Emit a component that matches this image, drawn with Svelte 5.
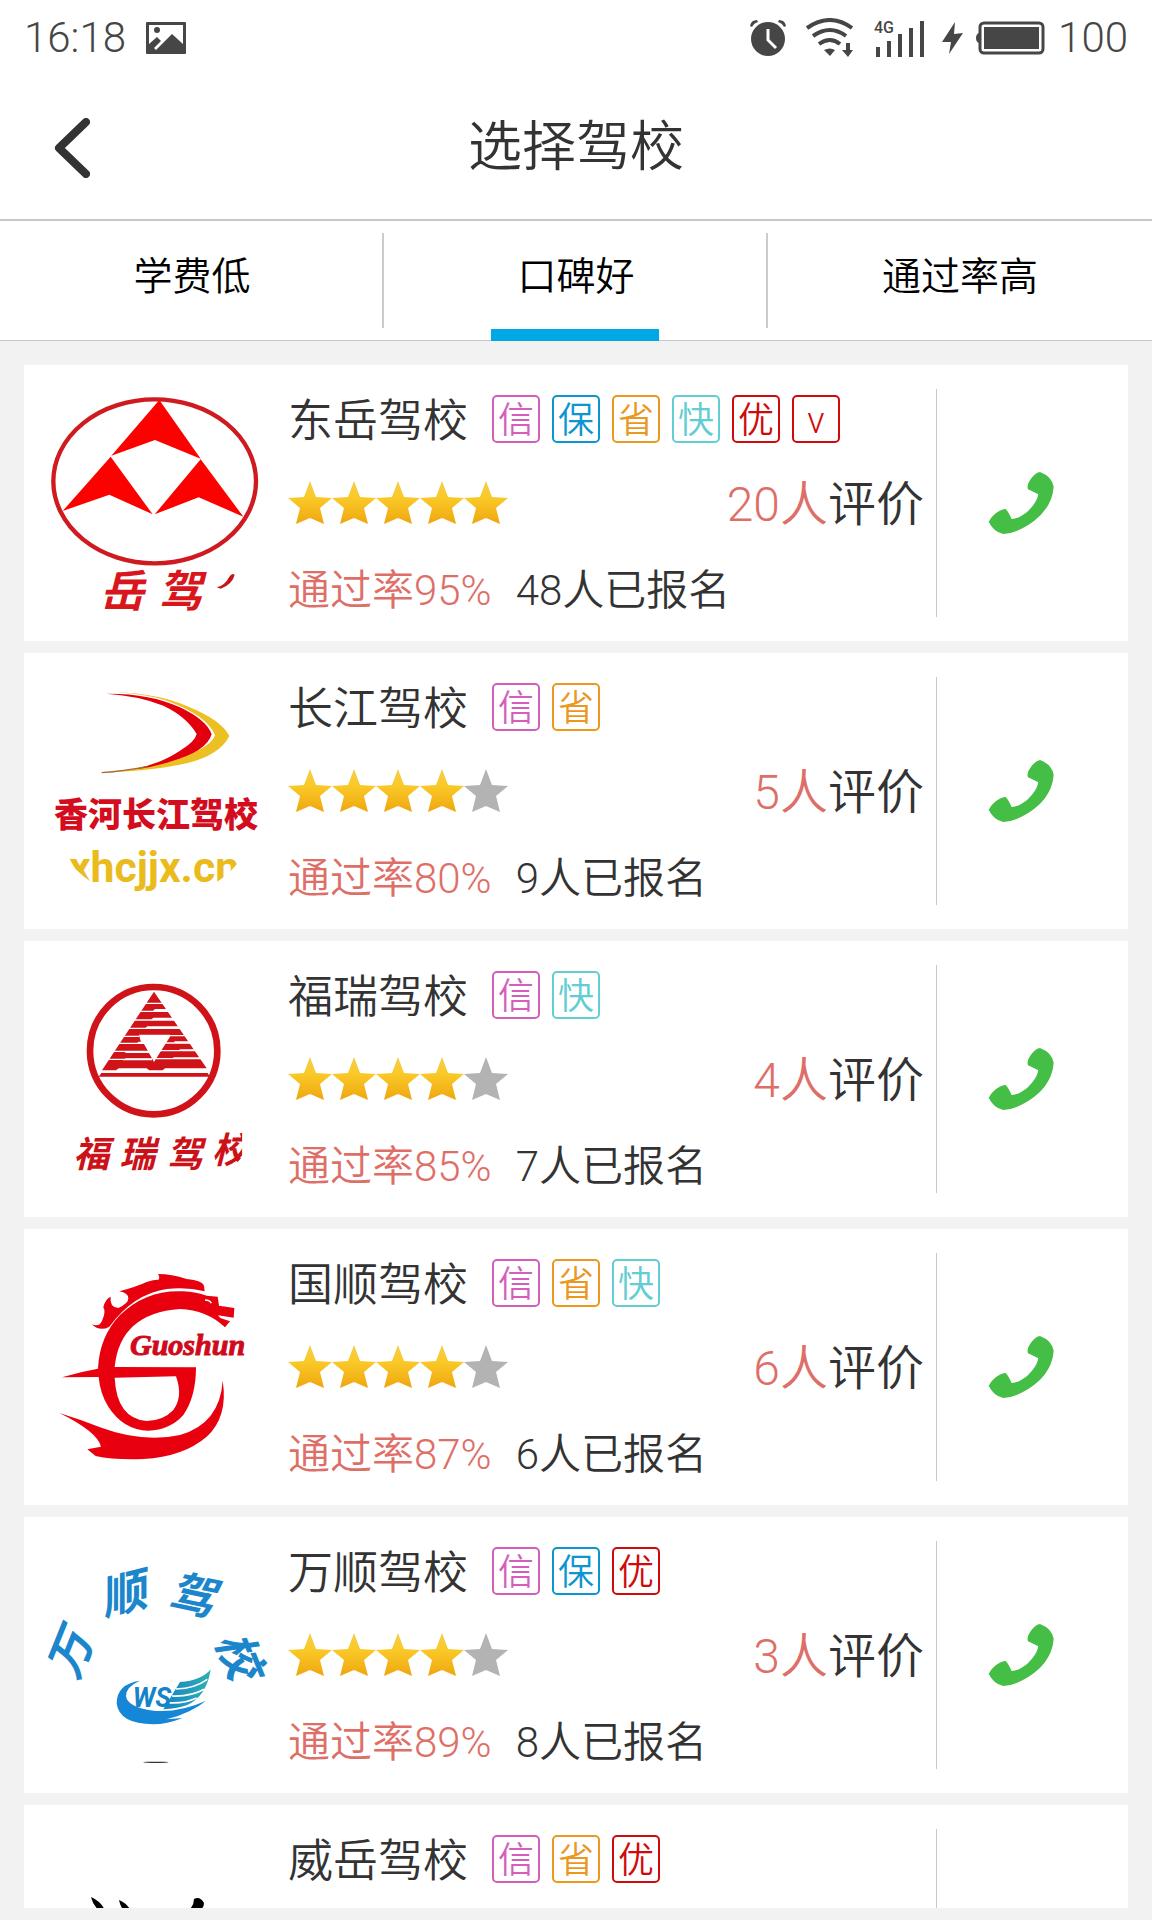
<script lang="ts">
  const tabs = ["学费低", "口碑好", "通过率高"];
  let activeTab = $state("口碑好");

  const badgeKinds = {
    信: "credit",
    保: "insured",
    省: "saving",
    快: "fast",
    优: "quality",
    v: "vip",
  };

  const schools = [
    { id: "dongyue", name: "东岳驾校", badges: ["信", "保", "省", "快", "优", "v"], stars: 5, reviews: 20, passRate: 95, enrolled: 48 },
    { id: "changjiang", name: "长江驾校", badges: ["信", "省"], stars: 4, reviews: 5, passRate: 80, enrolled: 9 },
    { id: "furui", name: "福瑞驾校", badges: ["信", "快"], stars: 4, reviews: 4, passRate: 85, enrolled: 7 },
    { id: "guoshun", name: "国顺驾校", badges: ["信", "省", "快"], stars: 4, reviews: 6, passRate: 87, enrolled: 6 },
    { id: "wanshun", name: "万顺驾校", badges: ["信", "保", "优"], stars: 4, reviews: 3, passRate: 89, enrolled: 8 },
    { id: "weiyue", name: "威岳驾校", badges: ["信", "省", "优"], stars: 4, reviews: 2, passRate: 86, enrolled: 5 },
  ];
</script>

{#snippet logo(id)}
  {#if id === "dongyue"}
    <svg class="logo" viewBox="60 87 684 684" aria-hidden="true">
      <ellipse cx="404" cy="364" rx="304" ry="246" fill="none" stroke="#cf1a20" stroke-width="13" />
      <g fill="#fb0200">
        <path d="M418 120 L542 296 L405 240 L274 287Z" />
        <path d="M272 290 L398 463 L268 404 L128 453Z" />
        <path d="M542 298 L670 470 L536 412 L404 463Z" />
      </g>
      <g class="brush" fill="#d8161c" font-size="132">
        <text x="240" y="741">岳</text>
        <text x="415" y="741">驾</text>
      </g>
      <path d="M590 682 Q615 676 628 650 Q636 638 644 644 Q638 672 602 686Z" fill="#c3161c" />
    </svg>
  {:else if id === "changjiang"}
    <svg class="logo" viewBox="60 51 684 684" aria-hidden="true">
      <path d="M290 97 Q410 100 500 138 Q605 180 628 228 Q600 285 500 310 Q420 330 245 339 Q400 322 470 297 Q575 262 585 225 Q560 165 440 122 Q380 103 290 97Z" fill="#ecc022" />
      <path d="M260 101 Q390 100 480 142 Q560 180 575 223 Q560 275 450 305 Q400 322 340 328 Q420 312 480 272 Q525 245 530 222 Q500 170 430 137 Q360 108 260 101Z" fill="#e2000f" />
      <path d="M245 338 Q310 334 380 320" fill="none" stroke="#a56a3a" stroke-width="4" />
      <text class="heavy" x="102" y="501" font-size="102" fill="#d40d1e">香河长江驾校</text>
      <clipPath id="round"><circle cx="402" cy="393" r="332" /></clipPath>
      <text class="domain" x="402" y="666" text-anchor="middle" font-size="128" fill="#eabb1c" clip-path="url(#round)">xhcjjx.cn</text>
    </svg>
  {:else if id === "furui"}
    <svg class="logo" viewBox="60 75 684 684" aria-hidden="true">
      <circle cx="401" cy="332" r="191" fill="none" stroke="#d01219" stroke-width="20" />
      <path d="M402 155 L560 385 L435 385 L428 391 L388 391 L380 385 L296 385 L288 391 L246 391Z" fill="#d01219" />
      <path d="M236 410 L244 399 H563 L570 410Z" fill="#d01219" />
      <path d="M357 284 H450 V290 L402 366 L372 312 L362 304Z" fill="#fff" />
      <path
        d="M360 190 H445 M345 214 H465 M330 240 H480 M312 265 H495 M298 289 H358 M450 287 H510 M280 310 H375 M432 309 H525 M265 334 H388 M420 332 H540 M250 358 H395 M408 356 H555"
        stroke="#fff"
        stroke-width="4"
      />
      <g fill="#fff">
        <path d="M405 207 H452 V214 H398Z" />
        <path d="M400 233 H470 V240 H392Z" />
        <path d="M382 259 H486 V266 H374Z" />
        <path d="M356 305 H375 V311 H348Z" />
        <path d="M322 333 H388 V339 H314Z" />
        <path d="M318 355 H396 V361 H308Z" />
        <path d="M462 304 H525 V310 H468Z" />
        <path d="M480 328 H540 V333 H474Z" />
        <path d="M462 352 H556 V357 H454Z" />
      </g>
      <clipPath id="round-furui"><path d="M60 75 H667 V650 L640 680 V700 H60Z" /></clipPath>
      <g class="brush" fill="#cc1118" font-size="108" clip-path="url(#round-furui)">
        <text x="160" y="680">福</text>
        <text x="298" y="680">瑞</text>
        <text x="440" y="680">驾</text>
        <text x="576" y="670">校</text>
      </g>
    </svg>
  {:else if id === "guoshun"}
    <svg class="logo" viewBox="60 69 684 684" aria-hidden="true">
      <g fill="#e8000f">
        <path d="M414 132 Q455 132 500 147 Q548 152 552 168 L554 184 Q500 170 440 177 Q340 192 268 290 Q240 306 215 283 Q240 292 247 270 Q258 245 250 232 Q256 206 272 200 Q268 232 295 234 Q326 220 325 205 Q324 188 298 184 Q350 170 380 156 Q408 148 415 150 Q421 142 414 132Z" />
        <path fill-rule="evenodd" d="M560 197 L593 200 L597 227 L643 234 L641 263 L594 256 L601 264 L630 274 L615 292 Q560 240 480 237 Q300 250 284 411 L528 412 Q528 500 490 555 Q450 600 385 602 Q310 600 265 530 Q240 490 236 441 L126 442 Q180 425 234 416 Q238 320 300 255 Q380 178 490 184 Q530 186 560 197Z M284 443 L468 439 Q490 500 460 540 Q430 572 380 573 Q290 565 284 443Z" />
        <path d="M118 549 Q180 568 240 592 Q370 640 480 615 Q600 580 608 452 Q625 560 560 620 Q490 680 370 687 Q280 690 227 678 L202 658 Q222 653 243 650 Q232 605 118 549Z" />
      </g>
      <path d="M555 210 Q570 210 574 220" fill="none" stroke="#fff" stroke-width="4" />
      <text class="script" x="330" y="376" font-size="90" fill="#cf0a1c" stroke="#cf0a1c" stroke-width="3">Guoshun</text>
    </svg>
  {:else if id === "wanshun"}
    <svg class="logo" viewBox="60 63 684 684" aria-hidden="true">
      <defs>
        <linearGradient id="sail" x1="0" y1="0" x2="1" y2="0">
          <stop offset="0" stop-color="#1582c4" />
          <stop offset="1" stop-color="#2fb0b4" />
        </linearGradient>
      </defs>
      <g class="brush" fill="#1b86cc" font-size="138" text-anchor="middle">
        <text transform="translate(150 402) rotate(-68)" y="50">万</text>
        <text transform="translate(308 222) rotate(-14)" y="50">顺</text>
        <text transform="translate(516 225) rotate(12)" y="50">驾</text>
        <text transform="translate(658 405) rotate(68)" y="50">校</text>
      </g>
      <path d="M360 482 Q290 492 290 550 Q297 612 400 613 Q440 613 488 594 L440 598 Q515 578 558 542 Q480 578 400 572 Q322 562 318 528 Q318 500 360 482Z" fill="#1686d6" />
      <path d="M480 486 Q545 482 572 448 Q560 530 500 556 Q470 566 430 568Z" fill="url(#sail)" />
      <path d="M468 507 Q525 505 562 478 M456 528 Q515 530 552 508 M444 548 Q490 552 530 534" fill="none" stroke="#fff" stroke-width="5" />
      <text class="initials" x="338" y="560" font-size="80" fill="#1583c8">WS</text>
      <ellipse cx="408" cy="727" rx="38" ry="2" fill="#333" />
    </svg>
  {:else}
    <svg class="logo" viewBox="0 0 228 228" aria-hidden="true">
      <path d="M51 68 Q62 73 65 82 H60 Q53 77 51 68Z M79 71 Q87 74 91 82 H84 Q80 77 79 71Z M148 82 Q154 77 154 70 Q160 67 164 74 Q164 79 159 82Z" fill="#000" />
    </svg>
  {/if}
{/snippet}

<div class="screen">
  <div class="status-bar">
    <span>16:18</span>
    <svg width="40" height="32" viewBox="0 0 40 32" aria-hidden="true">
      <path fill="#464646" fill-rule="evenodd" d="M1 0 H39 Q40 0 40 1 V31 Q40 32 39 32 H1 Q0 32 0 31 V1 Q0 0 1 0Z M3 3 V22 L11 15 L15 19 L8 26 L10 28 L26 12 L37 22 V3Z" />
      <circle cx="11" cy="8" r="3" fill="#464646" />
    </svg>
    <div class="status-icons">
      <svg width="36" height="38" viewBox="0 0 36 38" aria-hidden="true">
        <circle cx="18" cy="20" r="17" fill="#464646" />
        <path d="M0 7 Q1 1 7 1 L8 3 Q4 4 2 8Z M36 7 Q35 1 29 1 L28 3 Q32 4 34 8Z" fill="#464646" />
        <path d="M18 10 V21 L26 29" fill="none" stroke="#fff" stroke-width="3" />
      </svg>
      <svg width="48" height="40" viewBox="0 0 48 40" aria-hidden="true">
        <g fill="none" stroke="#464646" stroke-width="4">
          <path d="M1 10 Q24 -6 46 10" />
          <path d="M7 18 Q24 6 40 18" />
          <path d="M13 26 Q24 18 34 26" />
        </g>
        <path d="M18 32 Q24 29 29 32 L24 38Z" fill="#464646" />
        <path d="M40 25 H44 V32 H47 L42 39 L36 32 H40Z" fill="#464646" />
      </svg>
      <svg class="signal" width="52" height="38" viewBox="0 0 52 38" aria-hidden="true">
        <text x="0" y="14" font-size="16" font-weight="500" fill="#464646">4G</text>
        <path d="M2 28 h4 v10 h-4z M13 22 h4 v16 h-4z M24 15 h4 v23 h-4z M35 9 h4 v29 h-4z M46 2 h4 v36 h-4z" fill="#464646" />
      </svg>
      <svg class="bolt" width="22" height="32" viewBox="0 0 22 32" aria-hidden="true">
        <path d="M13 0 L0 20 L9 20 L7 32 L21 11 L12 12Z" fill="#464646" />
      </svg>
      <svg class="battery" width="70" height="34" viewBox="0 0 70 34" aria-hidden="true">
        <rect x="4" y="2" width="63" height="30" rx="4" fill="none" stroke="#464646" stroke-width="3" />
        <rect x="8" y="6" width="55" height="22" fill="#464646" />
        <path d="M3 12 Q0 13 0 17 Q0 21 3 22Z" fill="#464646" />
      </svg>
      <span>100</span>
    </div>
  </div>

  <header class="title-bar">
    <button class="back" type="button" aria-label="返回">
      <svg width="36" height="60" viewBox="0 0 36 60" aria-hidden="true">
        <path d="M32 4 L5 30 L32 56" fill="none" stroke="#333" stroke-width="8" stroke-linecap="round" stroke-linejoin="round" />
      </svg>
    </button>
    <h1>选择驾校</h1>
  </header>

  <nav class="tabs">
    {#each tabs as tab (tab)}
      <button
        class="tab"
        class:active={tab === activeTab}
        type="button"
        onclick={() => (activeTab = tab)}
      >
        {tab}
      </button>
    {/each}
  </nav>

  <ul class="schools">
    {#each schools as school (school.id)}
      <li class="card">
        {@render logo(school.id)}
        <div class="info">
          <div class="row">
            <h2>{school.name}</h2>
            <div class="badges">
              {#each school.badges as badge (badge)}
                <span class="badge {badgeKinds[badge]}">{badge}</span>
              {/each}
            </div>
          </div>
          <div class="row">
            <div class="stars">
              {#each [1, 2, 3, 4, 5] as n (n)}
                <svg width="44" height="44" viewBox="0 0 44 44" aria-hidden="true">
                  <path
                    class="star"
                    class:on={n <= school.stars}
                    d="M22 0 L28 16 L44 17 L32 27 L36 43 L22 37 L8 43 L12 27 L0 17 L16 16Z"
                  />
                </svg>
              {/each}
            </div>
            <p class="reviews"><span class="accent">{school.reviews}人</span>评价</p>
          </div>
          <div class="row facts">
            <span class="accent">通过率{school.passRate}%</span>
            <span>{school.enrolled}人已报名</span>
          </div>
        </div>
        <button class="call" type="button" aria-label="拨打{school.name}电话">
          <svg width="66" height="64" viewBox="862 93 198 192" aria-hidden="true">
            <path d="M1018 96 Q1054 110 1059 140 Q1055 200 1000 243 Q950 280 908 282 Q878 275 864 245 Q880 214 914 206 Q922 212 933 237 Q950 238 980 215 Q1008 190 1013 163 L982 148 Q978 138 985 125 Q1002 98 1018 96Z" fill="#45be45" />
          </svg>
        </button>
      </li>
    {/each}
  </ul>
</div>

<svg class="defs" width="0" height="0" aria-hidden="true">
  <linearGradient id="gold" x1="0" y1="0" x2="0" y2="1">
    <stop offset="0" stop-color="#f0cf4c" />
    <stop offset="0.4" stop-color="#fac928" />
    <stop offset="1" stop-color="#efa60f" />
  </linearGradient>
</svg>

<style>
  :global(body) {
    background: #f2f2f2;
  }

  .screen {
    display: flex;
    flex-direction: column;
    height: 100vh;
    overflow: hidden;
    background: #f2f2f2;
    color: #333;
    font-family: Roboto, "Noto Sans CJK SC", sans-serif;
    font-weight: 350;
  }

  h1,
  h2,
  p,
  ul {
    margin: 0;
    padding: 0;
    font-weight: inherit;
  }

  button {
    padding: 0;
    border: 0;
    background: none;
    color: inherit;
    font: inherit;
    cursor: pointer;
  }

  svg {
    display: block;
    flex: none;
  }

  .defs {
    position: absolute;
  }

  .status-bar {
    display: flex;
    align-items: center;
    gap: 20px;
    height: 76px;
    flex: none;
    padding: 0 24px;
    background: #fff;
    color: #464646;
    font-size: 42px;
    font-weight: 300;
    line-height: 76px;
  }

  .status-icons {
    display: flex;
    align-items: center;
    gap: 20px;
    margin-left: auto;
  }

  .signal {
    margin-right: -4px;
  }

  .bolt {
    margin-right: -8px;
  }

  .battery {
    margin-right: -8px;
  }

  .title-bar {
    display: grid;
    grid-template-columns: 148px 1fr 148px;
    align-items: center;
    height: 143px;
    flex: none;
    border-bottom: 2px solid #c8c8c8;
    background: #fff;
  }

  .back {
    display: flex;
    align-items: center;
    height: 100%;
    padding-left: 54px;
  }

  h1 {
    font-size: 54px;
    line-height: 72px;
    text-align: center;
  }

  .tabs {
    display: flex;
    flex: none;
    border-bottom: 1px solid #c8c8c8;
    background: #fff;
  }

  .tab {
    position: relative;
    flex: 1;
    height: 119px;
    padding-bottom: 16px;
    color: #000;
    font-size: 39px;
  }

  .tab + .tab::before {
    content: "";
    position: absolute;
    top: 12px;
    bottom: 12px;
    left: -2px;
    border-left: 2px solid #ccc;
  }

  .tab.active::after {
    content: "";
    position: absolute;
    bottom: -1px;
    left: 50%;
    width: 168px;
    height: 12px;
    margin-left: -85px;
    background: #00a8e6;
  }

  .schools {
    display: flex;
    flex: 1;
    flex-direction: column;
    gap: 12px;
    min-height: 0;
    margin: 24px 24px 12px;
    overflow: hidden;
    list-style: none;
  }

  .card {
    display: flex;
    flex: none;
    padding: 24px 24px 24px 16px;
    background: #fff;
  }

  .logo {
    width: 228px;
    height: 228px;
    margin-right: 20px;
  }

  .brush {
    font-style: italic;
    font-weight: 700;
  }

  .heavy {
    font-weight: 900;
  }

  .domain {
    font-weight: 700;
  }

  .script {
    font-family: "Liberation Serif", serif;
    font-style: italic;
    font-weight: 700;
  }

  .initials {
    font-style: italic;
    font-weight: 700;
  }

  .info {
    display: grid;
    flex: 1;
    grid-template-rows: 60px 108px 60px;
    min-width: 0;
    padding-right: 12px;
  }

  .row {
    display: flex;
    align-items: center;
  }

  h2 {
    padding-top: 6px;
    font-size: 45px;
    line-height: 54px;
  }

  .badges {
    display: flex;
    gap: 12px;
    margin-left: 24px;
  }

  .badge {
    box-sizing: border-box;
    width: 48px;
    height: 48px;
    border: 2px solid currentColor;
    border-radius: 5px;
    font-size: 36px;
    line-height: 48px;
    text-align: center;
  }

  .credit {
    color: #d45fba;
  }

  .insured {
    color: #0c96cf;
  }

  .saving {
    color: #ea981f;
  }

  .fast {
    color: #62cdd2;
  }

  .quality,
  .vip {
    color: #cf0a0a;
  }

  .stars {
    display: flex;
  }

  .star {
    fill: #b3b3b3;
  }

  .star.on {
    fill: url(#gold);
  }

  .reviews {
    margin-left: auto;
    padding-top: 4px;
    font-size: 48px;
    line-height: 60px;
  }

  .facts {
    gap: 24px;
    padding-top: 8px;
    font-size: 42px;
    line-height: 52px;
  }

  .accent {
    color: #de6f68;
  }

  .call {
    display: flex;
    align-items: center;
    justify-content: center;
    width: 168px;
    border-left: 1px solid #c8c8c8;
  }
</style>
